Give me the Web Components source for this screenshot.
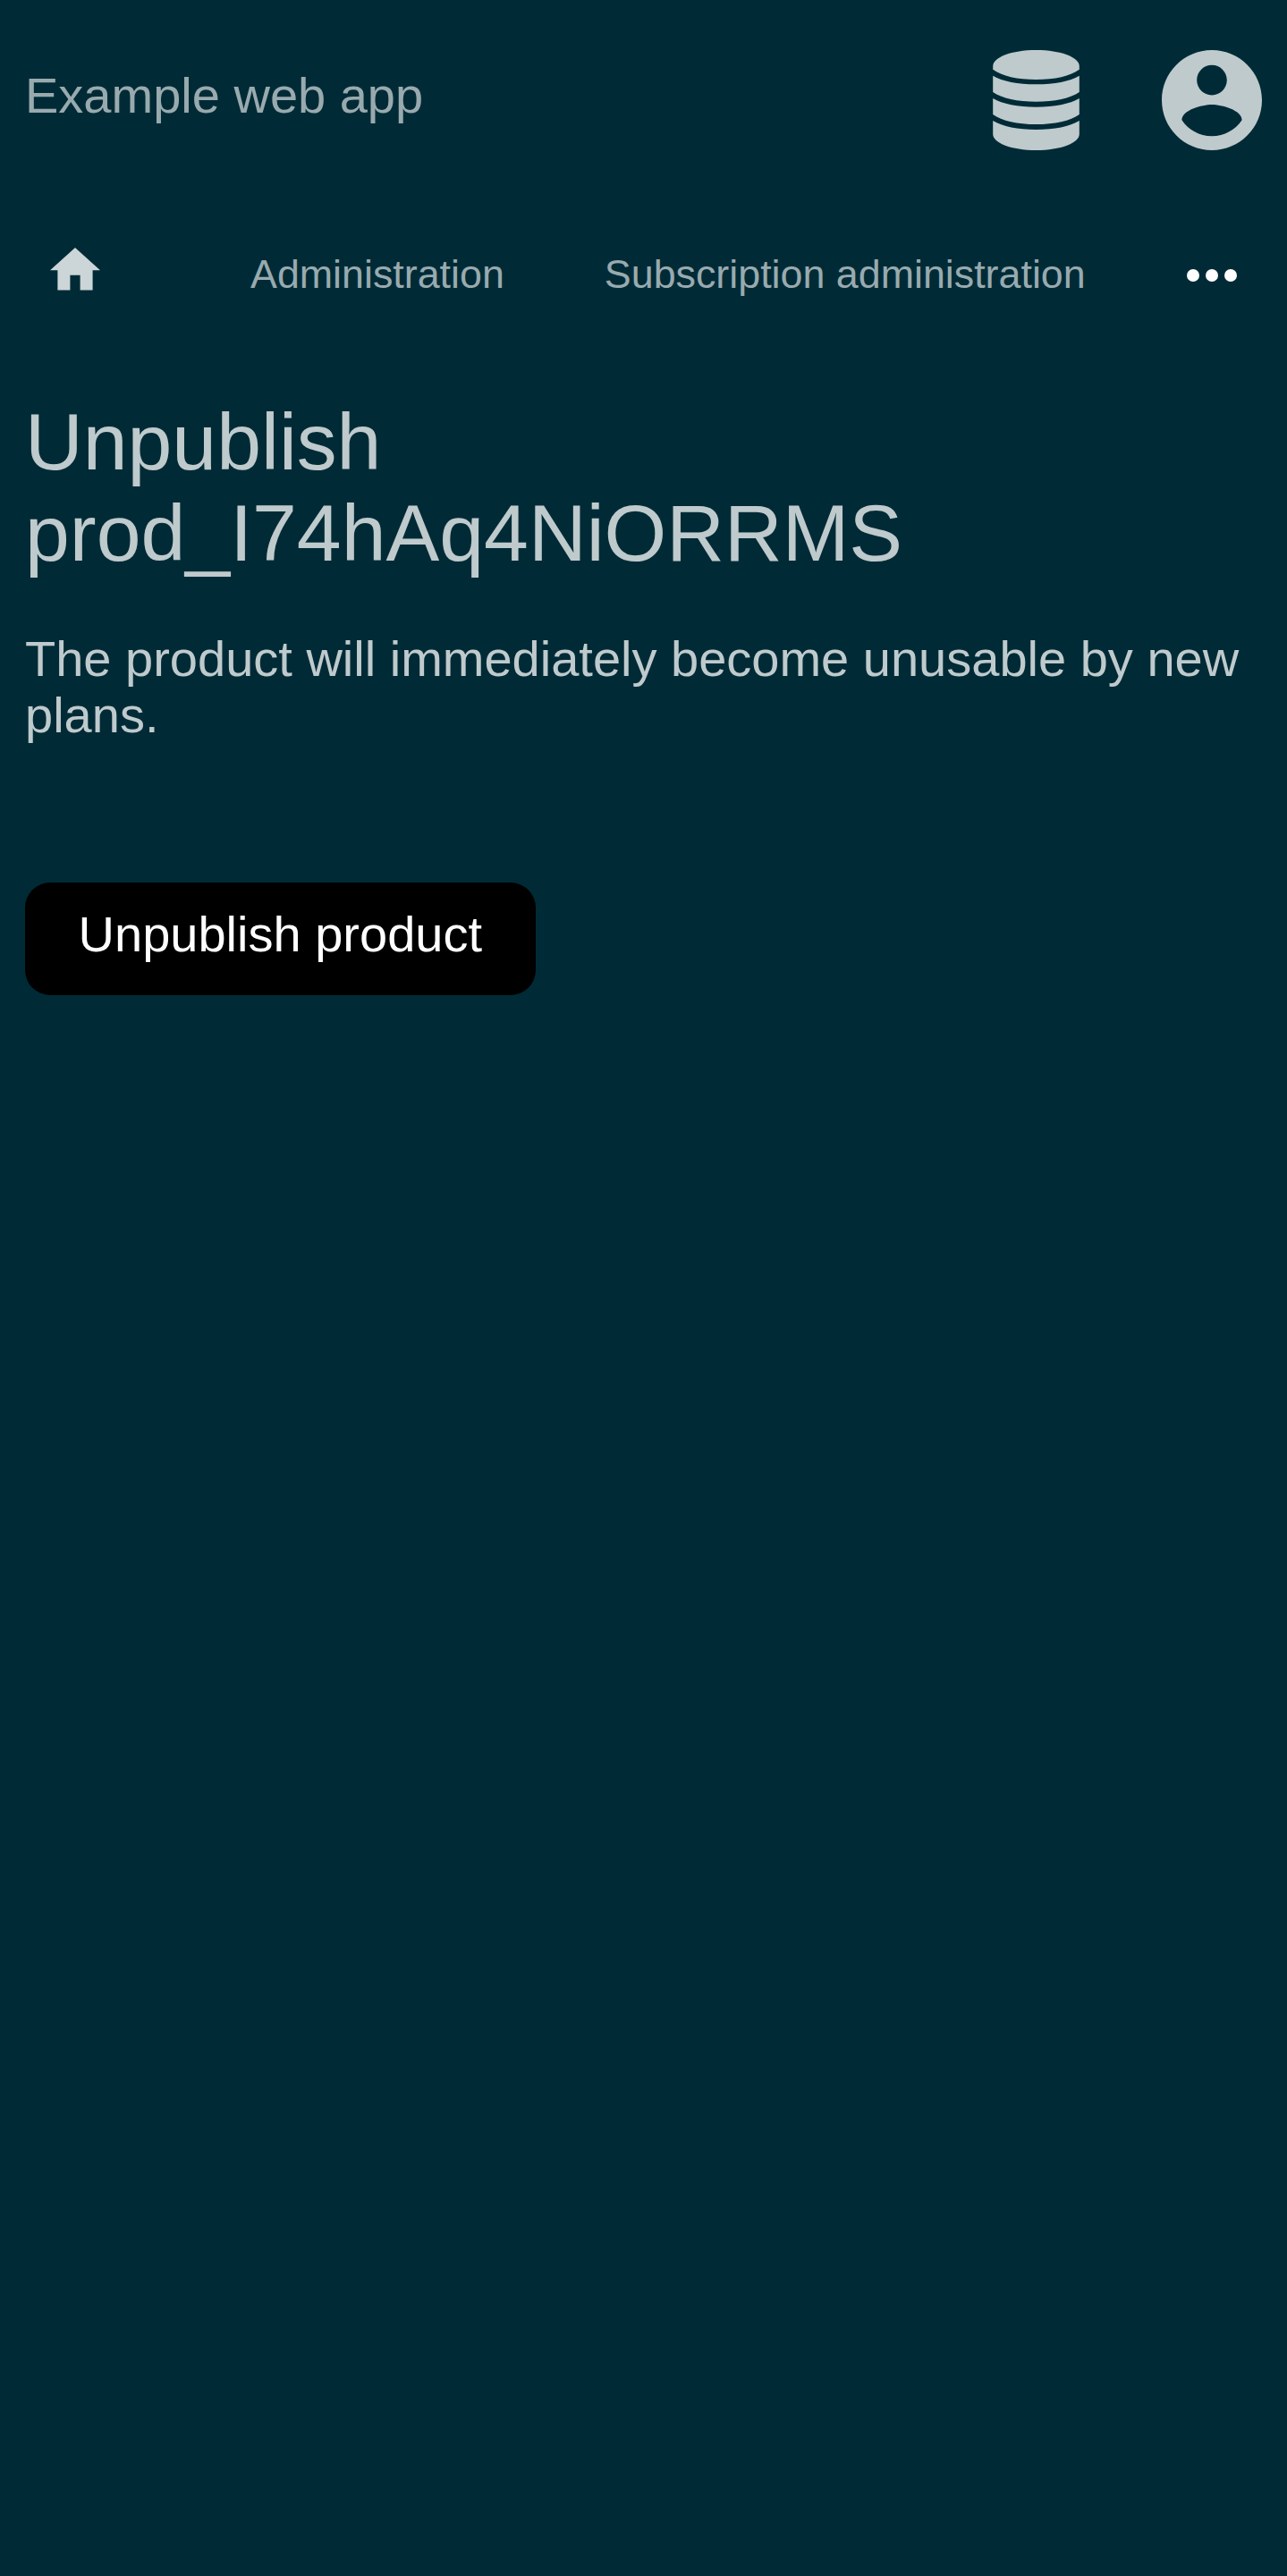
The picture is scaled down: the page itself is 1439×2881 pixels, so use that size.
<!DOCTYPE html>
<html lang="en">
<head>
<meta charset="utf-8">
<title>Unpublish product</title>
<style>
html, body { margin: 0; background: #002b36; }
body { font-family: "Liberation Sans", Arial, sans-serif; font-size: 56px; line-height: 63px; color: #bfcacd; min-height: 2881px; }
</style>
</head>
<body>
<app-shell>
  <app-header slot="header">Example web app</app-header>
  <app-nav slot="nav">
    <nav-link>Administration</nav-link>
    <nav-link>Subscription administration</nav-link>
  </app-nav>
  <page-heading>Unpublish prod_I74hAq4NiORRMS</page-heading>
  <page-text>The product will immediately become unusable by new plans.</page-text>
  <action-button>Unpublish product</action-button>
</app-shell>
<script>
const define = (name, html) => customElements.define(name, class extends HTMLElement {
  constructor() {
    super();
    this.attachShadow({ mode: 'open' }).innerHTML = html;
  }
});

define('app-shell', `
  <style>
    :host { display: flex; flex-direction: column; }
    main { display: flex; flex-direction: column; align-items: flex-start; padding: 0 28px; }
  </style>
  <slot name="header"></slot>
  <slot name="nav"></slot>
  <main><slot></slot></main>`);

define('app-header', `
  <style>
    :host { display: flex; justify-content: space-between; align-items: flex-start; height: 224px; padding: 56px 28px 0; box-sizing: border-box; }
    .title { color: #99aaaf; padding-top: 19px; }
    .icons { display: flex; gap: 92px; }
    svg { display: block; height: 112px; fill: #bfcacd; }
    .db { width: 97px; }
    .user { width: 112px; }
  </style>
  <div class="title"><slot></slot></div>
  <div class="icons">
    <svg class="db" viewBox="0 0 97 112">
      <path d="M.2 18C.2 8 21 0 48.500 0S96.800 8 96.800 18V21.700C87 29 69 33 48.500 33S10 29 .2 21.700Z"/>
      <path d="M.2 28.700C11 35 28 38.300 48.500 38.300S86 35 96.800 28.700V47C87 54 69 57.700 48.500 57.700S10 54 .2 47Z"/>
      <path d="M.2 54C11 60.300 28 63.700 48.500 63.700S86 60.300 96.800 54V71.900C87 79 69 83 48.500 83S10 79 .2 71.900Z"/>
      <path d="M.2 79C11 85.500 28 89 48.500 89S86 85.500 96.800 79V94C96.800 104 76 112 48.500 112S.2 104 .2 94Z"/>
    </svg>
    <svg class="user" viewBox="2 2 20 20"><path d="M12 2C6.480 2 2 6.480 2 12s4.480 10 10 10 10-4.480 10-10S17.520 2 12 2zm0 3c1.660 0 3 1.340 3 3s-1.340 3-3 3-3-1.340-3-3 1.340-3 3-3zm0 14.200c-2.500 0-4.710-1.280-6-3.220.03-1.990 4-3.080 6-3.080 1.990 0 5.970 1.090 6 3.080-1.290 1.940-3.500 3.220-6 3.220z"/></svg>
  </div>`);

define('app-nav', `
  <style>
    :host { display: flex; align-items: flex-start; height: 219px; padding: 53px 56px 0; box-sizing: border-box; }
    .home { display: block; width: 56px; height: 47.600px; margin-right: 168px; fill: #ccd5d7; }
    .links { display: flex; flex: 1; gap: 112px; padding-top: 4px; }
    .more { display: block; width: 56px; height: 14px; margin-top: 24px; fill: #fff; }
  </style>
  <svg class="home" viewBox="2 3 20 17"><path d="M10 20v-6h4v6h5v-8h3L12 3 2 12h3v8z"/></svg>
  <div class="links"><slot></slot></div>
  <svg class="more" viewBox="0 0 56 14"><circle cx="7" cy="7" r="7"/><circle cx="28" cy="7" r="7"/><circle cx="49" cy="7" r="7"/></svg>`);

define('nav-link', `
  <style>:host { display: block; color: #99aaaf; font-size: 44.800px; line-height: 51px; white-space: nowrap; }</style>
  <slot></slot>`);

define('page-heading', `
  <style>
    :host { display: block; }
    h1 { margin: 0; font-size: 89.600px; font-weight: 400; line-height: 102px; }
  </style>
  <h1><slot></slot></h1>`);

define('page-text', `
  <style>
    :host { display: block; margin-top: 58px; }
    p { margin: 0; }
  </style>
  <p><slot></slot></p>`);

define('action-button', `
  <style>
    :host { display: block; margin-top: 156px; }
    button { display: block; width: 570.600px; height: 126px; margin: 0; padding: 0 0 11px; border: 0; border-radius: 28px; background: #000; color: #fff; font: inherit; text-align: center; }
  </style>
  <button type="button"><slot></slot></button>`);
</script>
</body>
</html>
